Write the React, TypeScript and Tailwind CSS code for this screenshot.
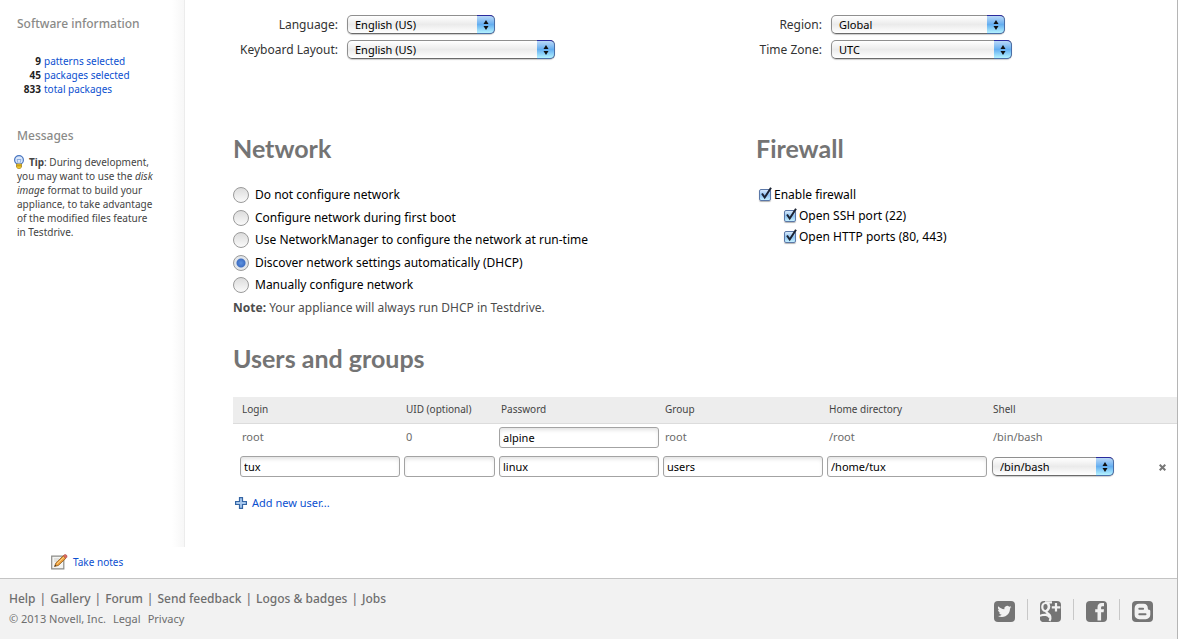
import type { ReactNode } from "react";

const packageStats = [
    { count: 9, label: "patterns selected" },
    { count: 45, label: "packages selected" },
    { count: 833, label: "total packages" },
];

const networkOptions = [
    { id: "none", label: "Do not configure network" },
    { id: "firstboot", label: "Configure network during first boot" },
    { id: "manager", label: "Use NetworkManager to configure the network at run-time" },
    { id: "dhcp", label: "Discover network settings automatically (DHCP)" },
    { id: "manual", label: "Manually configure network" },
];

const columns = ["Login", "UID (optional)", "Password", "Group", "Home directory", "Shell"];

const footerLinks = ["Help", "Gallery", "Forum", "Send feedback", "Logos & badges", "Jobs"];

const linkClass = "text-[#0b4fd0] hover:underline";

const Select = ({ id, label, value, className }: { id: string; label?: string; value: string; className: string }) => (
    <div className={`relative h-[19px] ${className}`}>
        <select
            id={id}
            aria-label={label}
            className="block h-full w-full appearance-none rounded-[5px] border border-[#8f8f8f] border-b-[#6a6a6a] bg-linear-to-b from-white via-[#ebebeb] to-white pl-[7px] text-[11px] leading-[17px] text-black shadow-[0_1px_1px_rgba(0,0,0,0.2)]"
        >
            <option>{value}</option>
        </select>
        <span className="pointer-events-none absolute inset-y-0 right-0 flex w-[18px] items-center justify-center rounded-r-[5px] border border-l-0 border-[#4a6fa8] border-t-[#2b2b9c] bg-linear-to-b from-[#b9d8f7] via-[#64aef0] to-[#b4f3ff]">
            <svg width="6" height="10" viewBox="0 0 6 10" fill="#111">
                <path d="M3 0 5.500 4H.5zM3 10 .5 6h5z" />
            </svg>
        </span>
    </div>
);

const Field = ({ label, value }: { label: string; value: string }) => (
    <input
        type="text"
        aria-label={label}
        defaultValue={value}
        className="block h-[21px] w-full rounded-[3px] border border-[#a3a3a3] bg-white px-[3px] text-[11px] leading-[19px] text-black shadow-[inset_0_3px_4px_-1px_rgba(0,0,0,0.12)]"
    />
);

const Checkbox = ({ children }: { children: ReactNode }) => (
    <label className="flex h-[21px] items-center gap-[3px] text-black">
        <span className="relative block size-3">
            <input
                type="checkbox"
                defaultChecked
                className="peer block size-3 appearance-none rounded-[2px] border border-[#5b78a8] bg-linear-to-b from-[#d9ebfb] via-[#8fc3f2] to-[#c4f0ff] shadow-[0_1px_1px_rgba(0,0,0,0.3)]"
            />
            <svg
                className="pointer-events-none absolute -top-0.5 left-0 hidden peer-checked:block"
                width="14"
                height="14"
                viewBox="0 0 14 14"
                fill="none"
                stroke="#1c2433"
                strokeWidth="2"
            >
                <path d="M3 6.500 5.700 10.500 12 .8" />
            </svg>
        </span>
        {children}
    </label>
);

const Heading = ({ children }: { children: ReactNode }) => (
    <h2 className="font-['Lato',sans-serif] text-[25px] leading-[30px] font-bold text-[#747474]">{children}</h2>
);

const BulbIcon = () => (
    <svg className="-ml-1 mr-1 inline-block align-top" width="12" height="14" viewBox="0 0 12 14">
        <circle cx="6" cy="5" r="4.400" fill="#dbe8fb" stroke="#4a76c0" strokeWidth="1.200" />
        <path d="M4 4.500 5.200 8.500M8 4.500 6.800 8.500M4 4.500h4" stroke="#7c9fd8" strokeWidth=".8" fill="none" />
        <path d="M3.500 9h5v3.200L7 13.600H5L3.500 12.200z" fill="#f2c92c" stroke="#a58014" strokeWidth=".7" />
        <path d="M3.500 10.800h5" stroke="#a58014" strokeWidth=".8" />
    </svg>
);

const NoteIcon = () => (
    <svg width="17" height="16" viewBox="0 0 17 16">
        <path d="M.7 2.200h12.100v12.600H.7z" fill="#f4f4f2" stroke="#8c8c88" strokeWidth="1.200" />
        <path d="M3 5h5M3 7h3" stroke="#cfcfcb" />
        <path d="M3.500 12.500 5 8.800 12.300 1.800 14.900 4.300 7.400 11.400z" fill="#f0a13c" stroke="#8f5a1a" strokeWidth=".8" />
        <path d="M6 9.800 13.200 3" stroke="#fbd48c" />
        <path d="M12.300 1.800 13.500.700c1.400-.6 3 .8 2.400 2.500l-1 1.100z" fill="#e06a60" stroke="#a84c46" strokeWidth=".6" />
        <path d="M3.500 12.500 4.200 10.700 5.400 11.800z" fill="#333" />
    </svg>
);

const PlusIcon = () => (
    <svg width="12" height="12" viewBox="0 0 12 12">
        <path d="M4.500.6h3v3.900h3.900v3H7.500v3.900h-3V7.500H.6v-3h3.900z" fill="#a9c9ee" stroke="#3465a4" strokeWidth="1.200" />
    </svg>
);

const TwitterIcon = () => (
    <svg width="21" height="21" viewBox="0 0 21 21">
        <rect width="21" height="21" rx="4" fill="#757575" />
        <path
            transform="translate(3.500 3.500) scale(.58)"
            fill="#f2f2f2"
            d="M24 4.557a9.830 9.830 0 0 1-2.828.775 4.932 4.932 0 0 0 2.165-2.724 9.864 9.864 0 0 1-3.127 1.195 4.916 4.916 0 0 0-8.384 4.482C7.691 8.094 4.066 6.130 1.640 3.161a4.822 4.822 0 0 0 1.523 6.574 4.903 4.903 0 0 1-2.229-.616c-.054 2.281 1.581 4.415 3.949 4.890a4.935 4.935 0 0 1-2.224.084 4.928 4.928 0 0 0 4.600 3.419A9.900 9.900 0 0 1 0 19.540a13.940 13.940 0 0 0 7.548 2.212c9.142 0 14.307-7.721 13.995-14.646A10.025 10.025 0 0 0 24 4.557z"
        />
    </svg>
);

const GooglePlusIcon = () => (
    <svg width="21" height="21" viewBox="0 0 21 21" fill="none">
        <rect width="21" height="21" rx="4" fill="#757575" />
        <g stroke="#f2f2f2" strokeWidth="2.200">
            <ellipse cx="5.500" cy="6" rx="3.200" ry="4" />
            <path d="M5 1.300h7M7.500 2c2.500 2 2.200 5-.2 7-1.600 1.600-1.200 2.300.6 3.500 3 2 3.200 4.500 1.600 7.500" />
            <path d="M0 15c4-2.200 8.500-1.200 9.800 1.500M16 2v8.500M11.800 6.300h8.500" />
        </g>
        <path d="M0 16c3-1.500 6.500-1 8 1 .8 1.500.2 3-.5 4H4a4 4 0 0 1-4-4z" fill="#757575" />
    </svg>
);

const FacebookIcon = () => (
    <svg width="21" height="21" viewBox="0 0 21 21">
        <rect width="21" height="21" rx="4" fill="#757575" />
        <path d="M11.500 19.500v-8.300H9.200V8.200h2.300V6.500c0-3 1.400-4.500 4.200-4.500H18v3.200h-1.500c-1.100 0-1.400.5-1.400 1.500v1.500H18l-.4 3h-2.500v8.300z" fill="#f2f2f2" />
    </svg>
);

const BloggerIcon = () => (
    <svg width="21" height="21" viewBox="0 0 21 21">
        <rect width="21" height="21" rx="4" fill="#757575" />
        <path d="M7.200 2.800h4.400c2.700 0 4.200 1.800 4.200 4.200 0 1.200.3 1.700 1.300 1.800.9.100 1.200.5 1.200 1.300v3.500c0 2.800-1.800 4.600-4.600 4.600H7.200c-2.800 0-4.600-1.800-4.600-4.600V7.400c0-2.800 1.800-4.600 4.600-4.600z" fill="#f2f2f2" />
        <path d="M7.300 7.700h3.800M7.300 13.300h6.200" stroke="#757575" strokeWidth="2" strokeLinecap="round" />
    </svg>
);

const socialLinks = [
    { name: "Twitter", icon: TwitterIcon },
    { name: "Google+", icon: GooglePlusIcon },
    { name: "Facebook", icon: FacebookIcon },
    { name: "Blogger", icon: BloggerIcon },
];

const Sidebar = () => (
    <aside className="flex w-[185px] shrink-0 flex-col text-[10px] leading-[14px]">
        <div className="flex-1 border-r border-[#ececec] bg-linear-to-l from-[#f7f7f7] to-white to-[12px] pt-4 pr-7 pl-[17px]">
            <h3 className="text-xs leading-4 font-medium whitespace-nowrap text-[#8a8a88]">Software information</h3>
            <ul className="mt-[22px]">
                {packageStats.map((stat) => (
                    <li key={stat.label} className="flex gap-[3px]">
                        <span className="w-6 text-right font-bold text-[#222]">{stat.count}</span>
                        <a href="#" className={linkClass}>
                            {stat.label}
                        </a>
                    </li>
                ))}
            </ul>
            <h3 className="mt-8 text-xs leading-4 font-medium text-[#8a8a88]">Messages</h3>
            <p className="mt-[11px] text-[#444]">
                <BulbIcon />
                <b>Tip</b>: During development, you may want to use the <i>disk image</i> format to build your
                appliance, to take advantage of the modified files feature in Testdrive.
            </p>
        </div>
        <a href="#" className={`flex h-[31px] items-center gap-[5px] pl-[51px] ${linkClass}`}>
            <NoteIcon />
            Take notes
        </a>
    </aside>
);

const LocaleSettings = () => (
    <section className="grid grid-cols-[523fr_421fr] text-[#333]">
        <div className="grid grid-cols-[105px_1fr] items-center gap-x-[9px] gap-y-1.5 self-start text-right">
            <label htmlFor="language">Language:</label>
            <Select id="language" value="English (US)" className="w-[148px]" />
            <label htmlFor="keyboard">Keyboard Layout:</label>
            <Select id="keyboard" value="English (US)" className="w-[208px]" />
        </div>
        <div className="grid grid-cols-[66px_1fr] items-center gap-x-[9px] gap-y-1.5 self-start text-right">
            <label htmlFor="region">Region:</label>
            <Select id="region" value="Global" className="w-[174px]" />
            <label htmlFor="timezone" className="whitespace-nowrap">
                Time Zone:
            </label>
            <Select id="timezone" value="UTC" className="w-[181px]" />
        </div>
    </section>
);

const NetworkSettings = () => (
    <section>
        <Heading>Network</Heading>
        <div className="mt-[23px] flex h-[108px] flex-col justify-between text-black">
            {networkOptions.map((option) => (
                <label key={option.id} className="flex h-[18px] items-center gap-1.5">
                    <input
                        type="radio"
                        name="network"
                        defaultChecked={option.id === "dhcp"}
                        className="size-4 appearance-none rounded-full border border-[#9a9a9a] bg-linear-to-b from-[#dcdcdc] to-[#fafafa] checked:bg-[radial-gradient(circle,#5c92e0_0,#3f6fc4_4px,#e2e6ea_5px)]"
                    />
                    {option.label}
                </label>
            ))}
        </div>
        <p className="mt-1.5 text-[#4d4d4d]">
            <b>Note:</b> Your appliance will always run DHCP in Testdrive.
        </p>
    </section>
);

const FirewallSettings = () => (
    <section>
        <Heading>Firewall</Heading>
        <div className="mt-[21px] pl-[3px]">
            <Checkbox>Enable firewall</Checkbox>
            <div className="pl-[25px]">
                <Checkbox>Open SSH port (22)</Checkbox>
                <Checkbox>Open HTTP ports (80, 443)</Checkbox>
            </div>
        </div>
    </section>
);

const UserTable = () => (
    <table className="mt-6 w-full table-fixed border-collapse text-left text-[11px]">
        <colgroup>
            <col className="w-[169px]" />
            <col className="w-[95px]" />
            <col className="w-[164px]" />
            <col className="w-[164px]" />
            <col className="w-[164px]" />
            <col />
            <col className="w-[30px]" />
        </colgroup>
        <thead>
            <tr className="h-[26px] border-b border-[#dcdcdc] bg-[#ededed] text-[10px] text-[#444]">
                {columns.map((column) => (
                    <th key={column} scope="col" className="pl-1 font-normal first:pl-[9px]">
                        {column}
                    </th>
                ))}
                <td />
            </tr>
        </thead>
        <tbody>
            <tr className="h-[29px] text-[#6b6b6b]">
                <td className="pl-[9px]">root</td>
                <td className="pl-1">0</td>
                <td className="px-0.5">
                    <Field label="Password for root" value="alpine" />
                </td>
                <td className="pl-1">root</td>
                <td className="pl-1">/root</td>
                <td className="pl-1">/bin/bash</td>
                <td />
            </tr>
            <tr className="h-[29px]">
                <td className="pr-0.5 pl-[7px]">
                    <Field label="Login" value="tux" />
                </td>
                <td className="px-0.5">
                    <Field label="UID" value="" />
                </td>
                <td className="px-0.5">
                    <Field label="Password" value="linux" />
                </td>
                <td className="px-0.5">
                    <Field label="Group" value="users" />
                </td>
                <td className="px-0.5">
                    <Field label="Home directory" value="/home/tux" />
                </td>
                <td className="pl-[3px]">
                    <Select id="shell" label="Shell" value="/bin/bash" className="w-[122px]" />
                </td>
                <td className="text-center">
                    <button type="button" aria-label="Remove user" className="inline-flex size-3 items-center justify-center align-middle">
                        <svg width="7" height="7" viewBox="0 0 7 7" stroke="#777" strokeWidth="2">
                            <path d="M.7.7l5.600 5.600M6.300.7.7 6.300" />
                        </svg>
                    </button>
                </td>
            </tr>
        </tbody>
    </table>
);

const Footer = () => (
    <footer className="flex justify-between border-t border-[#c4c4c4] bg-[#f2f2f2] pr-6 pl-[9px] text-[#6e6e6e]">
        <div className="pt-3 pb-[13px]">
            <ul className="flex text-xs leading-4 font-medium">
                {footerLinks.map((link, i) => (
                    <li key={link}>
                        {i > 0 && <span className="px-1">|</span>}
                        <a href="#" className="hover:underline">
                            {link}
                        </a>
                    </li>
                ))}
            </ul>
            <p className="mt-[5px] flex gap-[7px] text-[11px] leading-[14px]">
                <span>© 2013 Novell, Inc.</span>
                <a href="#" className="hover:underline">
                    Legal
                </a>
                <a href="#" className="hover:underline">
                    Privacy
                </a>
            </p>
        </div>
        <ul className="mt-5 flex h-[21px] divide-x divide-[#c8c8c8]">
            {socialLinks.map((social) => (
                <li key={social.name} className="px-3 last:pr-0">
                    <a href="#" aria-label={social.name} className="mt-0.5 block">
                        <social.icon />
                    </a>
                </li>
            ))}
        </ul>
    </footer>
);

const App = () => (
    <div className="border-r border-[#b5b5b5] bg-white font-['Noto_Sans','Open_Sans',sans-serif] text-xs">
        <div className="flex">
            <Sidebar />
            <main className="flex-1 pt-[15px] pb-[67px] pl-12">
                <LocaleSettings />
                <div className="mt-[74px] grid grid-cols-[523fr_421fr]">
                    <NetworkSettings />
                    <FirewallSettings />
                </div>
                <section className="mt-[27px]">
                    <Heading>Users and groups</Heading>
                    <UserTable />
                    <button type="button" className={`mt-[15px] ml-0.5 flex items-center gap-[5px] text-[11px] ${linkClass}`}>
                        <PlusIcon />
                        Add new user...
                    </button>
                </section>
            </main>
        </div>
        <Footer />
    </div>
);

export default App;
